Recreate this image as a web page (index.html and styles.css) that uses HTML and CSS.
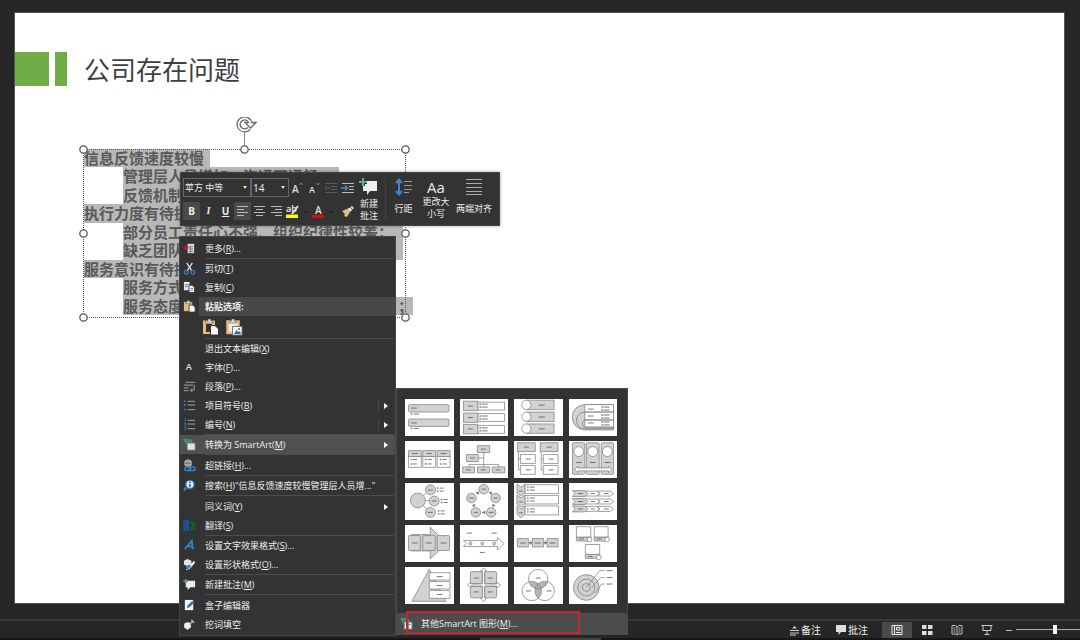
FILE: index.html
```html
<!DOCTYPE html>
<html lang="zh-CN">
<head>
<meta charset="utf-8">
<title>公司存在问题</title>
<link rel="stylesheet" href="styles.css">
</head>
<body>
<main class="workspace">
  <article class="slide">
    <header class="slide-head">
      <span class="block"></span><span class="bar"></span>
      <h1>公司存在问题</h1>
    </header>
    <section class="textbox">
      <p><mark class="pad">信息反馈速度较慢</mark></p>
      <p class="in"><mark class="pad">管理层人员增加，沟通不通畅；</mark></p>
      <p class="in"><mark>反馈机制不健全；</mark></p>
      <p><mark>执行力度有待提高</mark></p>
      <p class="in"><mark class="fill">部分员工责任心不强、组织纪律性较差；</mark></p>
      <p class="in"><mark class="fill">缺乏团队合作精神；</mark></p>
      <p><mark>服务意识有待提高</mark></p>
      <p class="in"><mark>服务方式单一；</mark></p>
      <p class="in"><mark class="long"><span>服务态度不够积极主动、需要再加强</span><span>；</span></mark></p>
      <svg class="frame" viewBox="0 0 334 206" width="334" height="206">
        <path d="M6 32.500H328M6 200.500H328M6.500 32V200M328.500 32V200" stroke="#555" stroke-dasharray="1 1" fill="none"/>
        <path d="M167.500 13V30" stroke="#888"/>
        <g fill="#fff" stroke="#555" stroke-width="1.300"><circle cx="6.500" cy="32.500" r="3.700"/><circle cx="167.500" cy="32.500" r="3.700"/><circle cx="328.500" cy="32.500" r="3.700"/><circle cx="6.500" cy="116.500" r="3.700"/><circle cx="328.500" cy="116.500" r="3.700"/><circle cx="6.500" cy="200.500" r="3.700"/><circle cx="328.500" cy="200.500" r="3.700"/></g>
        <g transform="translate(-1 -2)">
          <path d="M173 13.500A6 6 0 1 1 174.500 8" fill="none" stroke="#666" stroke-width="4.400"/>
          <path d="M169 7.500H180L174.500 13Z" fill="#fff" stroke="#666" stroke-width="1.300"/>
          <path d="M173 13.500A6 6 0 1 1 174.500 8.500" fill="none" stroke="#fff" stroke-width="1.800"/>
        </g>
      </svg>
    </section>
  </article>
</main>

<footer class="status">
  <button><svg width="11" height="12" viewBox="0 0 11 12"><path d="M1 6.500H10M1 9H10M1 11H7" stroke="#ccc"/><path d="M3 4.500L5.500 2L8 4.500Z" fill="#ccc"/></svg>备注</button>
  <button class="comments"><svg width="12" height="12" viewBox="0 0 12 12"><path d="M1 1H11V8H6L3.500 11V8H1Z" fill="#ddd"/></svg>批注</button>
  <button class="view on" aria-label="普通视图"><svg width="12" height="12" viewBox="0 0 12 12"><path d="M1 1.500H11V10.500H1ZM3.500 1V11M5.500 3.500H9V6H5.500ZM5 8.500H10" stroke="#eee" fill="none"/></svg></button>
  <button class="view" aria-label="幻灯片浏览"><svg width="12" height="12" viewBox="0 0 12 12"><path d="M1 1H5.500V5H1ZM7 1H11.500V5H7ZM1 7H5.500V11H1ZM7 7H11.500V11H7Z" fill="#ddd"/></svg></button>
  <button class="view" aria-label="阅读视图"><svg width="12" height="12" viewBox="0 0 12 12"><path d="M1 1.500H4.500L6 3L7.500 1.500H11V10H7.500L6 11L4.500 10H1ZM6 3V11M2.500 4H4.500M2.500 6H4.500M2.500 8H4.500M7.500 4H9.500M7.500 6H9.500M7.500 8H9.500" stroke="#bbb" fill="none"/></svg></button>
  <button class="view" aria-label="幻灯片放映"><svg width="12" height="12" viewBox="0 0 12 12"><path d="M.500 1.500H11.500M2 2V6.500H10V2M6 7V10M3.500 10.500H8.500" stroke="#ccc" fill="none"/></svg></button>
  <button class="minus" aria-label="缩小"><svg width="8" height="8" viewBox="0 0 8 8"><path d="M1 4.500H7" stroke="#bbb"/></svg></button>
  <input class="zoom" type="range" aria-label="缩放" min="0" max="100" value="62">
</footer>
<div class="edge"><span></span></div>

<section class="minibar" aria-label="格式">
  <div class="format">
    <div class="row">
      <label class="pick font"><select aria-label="字体"><option>苹方 中等</option></select></label>
      <label class="pick size"><select aria-label="字号"><option>14</option></select></label>
      <button aria-label="增大字号"><svg width="16" height="16" viewBox="0 0 16 16"><text x="2" y="13" class="la">A</text><path d="M9.500 5L11 3L12.500 5" stroke="#4a8cc8" fill="none"/></svg></button>
      <button aria-label="减小字号"><svg width="16" height="16" viewBox="0 0 16 16"><text x="2" y="13" class="sa">A</text><path d="M9.500 3L11 5L12.500 3" stroke="#4a8cc8" fill="none"/></svg></button>
      <button aria-label="减少缩进"><svg width="16" height="16" viewBox="0 0 16 16"><path d="M1 3.500H13M7 6.500H13M7 9.500H13M1 12.500H13M6 8H1M3 6L1 8L3 10" stroke="#5c5c5c" fill="none"/></svg></button>
      <button aria-label="增加缩进"><svg width="16" height="16" viewBox="0 0 16 16"><path d="M1 3.500H13M8 6.500H13M8 9.500H13M1 12.500H13" stroke="#bbb"/><path d="M0 8H6M4 5.500L6.500 8L4 10.500" stroke="#4a8cc8" stroke-width="1.500" fill="none"/></svg></button>
    </div>
    <div class="row">
      <button class="on"><b>B</b></button>
      <button><i>I</i></button>
      <button><u>U</u></button>
      <button class="on" aria-label="左对齐"><svg width="14" height="14" viewBox="0 0 14 14"><path d="M1 2.500H12M1 5.500H8M1 8.500H12M1 11.500H8" stroke="#bbb"/></svg></button>
      <button aria-label="居中"><svg width="14" height="14" viewBox="0 0 14 14"><path d="M1 2.500H12M3 5.500H10M1 8.500H12M3 11.500H10" stroke="#bbb"/></svg></button>
      <button aria-label="右对齐"><svg width="14" height="14" viewBox="0 0 14 14"><path d="M1 2.500H12M5 5.500H12M1 8.500H12M5 11.500H12" stroke="#bbb"/></svg></button>
      <button class="colour" aria-label="突出显示"><svg width="24" height="16" viewBox="0 0 24 16"><text x="1" y="9" class="ab">ab</text><path d="M7 11L13 3" stroke="#ddd" stroke-width="2"/><path d="M1 11.500H13V15H1Z" fill="#ff0"/><path d="M19 8H23L21 10Z" fill="#1c1c1c"/></svg></button>
      <button class="colour" aria-label="字体颜色"><svg width="24" height="16" viewBox="0 0 24 16"><text x="3" y="11" class="la">A</text><path d="M0 12H12V15H0Z" fill="#e00b0b"/><path d="M17 8H21L19 10Z" fill="#1c1c1c"/></svg></button>
      <button class="brush" aria-label="格式刷"><svg width="14" height="14" viewBox="0 0 14 14"><path d="M1 7L6 5L9 8L6 13L3 12L4 10Z" fill="#e4bd7c"/><path d="M6 5L9 8L10 7L13 4L11 2L8 4Z" fill="#ddd"/><path d="M9 3L12 6" stroke="#555"/></svg></button>
    </div>
  </div>
  <button class="big comment"><svg width="20" height="20" viewBox="0 0 20 20"><path d="M4 3H18V13H11L8 17V13H4Z" fill="#eee"/><path d="M4 0V8M0 4H8" stroke="#333" stroke-width="4"/><path d="M4 0V8M0 4H8" stroke="#5fae88" stroke-width="2"/></svg><span>新建</span><span>批注</span></button>
  <button class="big spacing"><svg width="20" height="20" viewBox="0 0 20 20"><path d="M5 3V15M2 5L5 1.500L8 5M2 13L5 16.500L8 13" stroke="#3d86d2" stroke-width="2" fill="none"/><path d="M10 3.500H18M10 7.500H18M10 11.500H18M10 14.500H15" stroke="#999"/></svg><span>行距</span></button>
  <button class="big case"><span class="aa">Aa</span><span>更改大</span><span>小写</span></button>
  <button class="big justify"><svg width="20" height="20" viewBox="0 0 20 20"><path d="M2 1.500H18M2 5.500H18M2 9.500H18M2 13.500H18M2 16.500H18" stroke="#aaa"/></svg><span>两端对齐</span></button>
</section>

<nav class="menu" aria-label="快捷菜单">
  <button><svg viewBox="0 0 14 14"><path d="M5 2H12V12H5Z" fill="#ddd"/><path d="M6 5H11M6 7.500H11M6 10H11M8 4V12" stroke="#777"/><path d="M0 6L3 3L6 6L3 9Z" fill="#c8102e"/></svg><span>更多(<u>R</u>)...</span></button>
  <hr>
  <button><svg viewBox="0 0 14 14"><path d="M4 1L9.500 9.500M10 1L4.500 9.500" stroke="#ddd" stroke-width="1.400"/><path d="M1.500 11A2 2 0 1 1 5.500 11A2 2 0 1 1 1.500 11M8.500 11A2 2 0 1 1 12.500 11A2 2 0 1 1 8.500 11" fill="none" stroke="#3d7fb8" stroke-width="1.400"/></svg><span>剪切(<u>T</u>)</span></button>
  <button><svg viewBox="0 0 14 14"><path d="M1 1H7V10H1Z" fill="#e8e8e8"/><path d="M2 4H6M2 6H5" stroke="#4577a8"/><path d="M6.500 4.500H10L12.500 7V12.500H6.500Z" fill="#fff" stroke="#333"/><path d="M8 8H11M8 10H11" stroke="#4577a8"/></svg><span>复制(<u>C</u>)</span></button>
  <div class="heading"><svg viewBox="0 0 14 14"><path d="M1 2H10V12H1Z" fill="#e4bd7c"/><path d="M3 4V2H4.500V.500H7V2H8.500V4Z" fill="#ddd" stroke="#444" stroke-width=".600"/><path d="M6.500 5.500H10.500L13 8V13H6.500Z" fill="#fff" stroke="#444"/></svg><b>粘贴选项:</b></div>
  <div class="paste">
    <button aria-label="只保留文本"><svg viewBox="0 0 18 18"><path d="M1 2.500H13V16H1Z" fill="#e4bd7c"/><path d="M4 6H10V7H8V14H4Z" fill="#333"/><path d="M3.500 5V3H6V1H9V3H11V5Z" fill="#ddd" stroke="#444" stroke-width=".500"/><path d="M8.500 7.500H13L16.500 11V17H8.500Z" fill="#fff" stroke="#333"/></svg></button>
    <button aria-label="图片"><svg viewBox="0 0 18 18"><path d="M2.500 3.500H13.500V15H2.500Z" fill="#eee" stroke="#e4bd7c" stroke-width="2.400"/><path d="M4.500 5V3H6.500V1H9.500V3H11.500V5Z" fill="#ddd" stroke="#444" stroke-width=".500"/><path d="M7.500 8.500H17V17H7.500Z" fill="#fff" stroke="#777"/><path d="M9 16L11.500 12L13.500 14L15 13L16 16Z" fill="#2d69b3"/><circle cx="14" cy="11" r="1" fill="#2d69b3"/></svg></button>
  </div>
  <hr>
  <button><svg viewBox="0 0 14 14"></svg><span>退出文本编辑(<u>X</u>)</span></button>
  <button><svg viewBox="0 0 14 14"><text x="3" y="10" class="la">A</text></svg><span>字体(<u>F</u>)...</span></button>
  <button><svg viewBox="0 0 14 14"><path d="M3 2.500H13M1 5.500H11M1 8.500H6M1 11.500H6M12 5V11H8M10 9L8 11L10 13" stroke="#aaa" fill="none"/></svg><span>段落(<u>P</u>)...</span></button>
  <button class="sub split"><svg viewBox="0 0 14 14"><path d="M5 2.500H13M5 6.500H13M5 11.500H13" stroke="#aaa"/><path d="M1 1.500H3V3.500H1ZM1 5.500H3V7.500H1ZM1 10.500H3V12.500H1Z" fill="#3d76b5"/></svg><span>项目符号(<u>B</u>)</span></button>
  <button class="sub split"><svg viewBox="0 0 14 14"><path d="M5 2.500H13M5 6.500H13M5 11.500H13" stroke="#aaa"/><path d="M2.500 0V4M1 5.500H3V8H1M1 10H3V13H1" stroke="#3d76b5" fill="none"/></svg><span>编号(<u>N</u>)</span></button>
  <hr>
  <button class="sub active"><svg viewBox="0 0 14 14"><path d="M0 1H8L11 4L8 7H3Z" fill="#3f8e70"/><path d="M4.500 5.500H13V13H4.500Z" fill="#f0f0f0" stroke="#777"/><path d="M6 8H11.500M6 10.500H11.500" stroke="#ccc"/></svg><span>转换为 SmartArt(<u>M</u>)</span></button>
  <hr class="wide">
  <button><svg viewBox="0 0 14 14"><circle cx="5.500" cy="4.500" r="4" fill="#ddd"/><path d="M1.500 4.500H9.500M5.500 .500V8.500M3.500 1V8M7.500 1V8" stroke="#444" stroke-width=".700"/><rect x="2" y="8.500" width="6" height="4" rx="2" fill="none" stroke="#3882cf" stroke-width="1.600"/><rect x="7" y="8.500" width="6" height="4" rx="2" fill="none" stroke="#3882cf" stroke-width="1.600"/></svg><span>超链接(<u>H</u>)...</span></button>
  <hr>
  <button><svg viewBox="0 0 14 14"><path d="M4 9L1 12.500" stroke="#3a78bd" stroke-width="2.500"/><circle cx="7.500" cy="6" r="4.500" fill="#e6eef7" stroke="#3a78bd" stroke-width="1.500"/><path d="M7.500 5.500V9M7.500 3V4.500" stroke="#2a5a9a" stroke-width="1.600"/></svg><span>搜索(<u>H</u>)"信息反馈速度较慢管理层人员增..."</span></button>
  <hr class="wide">
  <button class="sub"><svg viewBox="0 0 14 14"></svg><span>同义词(<u>Y</u>)</span></button>
  <button><svg viewBox="0 0 14 14"><path d="M1 2H6V12H1ZM2 5H6M2 8H6" fill="#174b8c" stroke="#1d63a8"/><path d="M7 3H11L13 5V12H8V9L10 7Z" fill="#17602a"/></svg><span>翻译(<u>S</u>)</span></button>
  <hr>
  <button><svg viewBox="0 0 14 14"><path d="M2 11L9.500 2L10.500 11M4.500 8H10" stroke="#3682c4" stroke-width="2" fill="none"/></svg><span>设置文字效果格式(<u>S</u>)...</span></button>
  <button><svg viewBox="0 0 14 14"><path d="M1 3L5 1L9 3V7L5 9L1 7Z" fill="#dce8f4"/><path d="M5 10L12 3L13 5L7 12L3 13Z" fill="#eee"/><path d="M3 9L7 7L9 9L5 13Z" fill="#3e85c8"/></svg><span>设置形状格式(<u>O</u>)...</span></button>
  <hr>
  <button><svg viewBox="0 0 14 14"><path d="M3 3H13V10H8L5 13V10H3Z" fill="#eee"/><path d="M3 1V6M.500 3.500H5.500" stroke="#5fae88" stroke-width="1.500"/></svg><span>新建批注(<u>M</u>)</span></button>
  <hr class="wide">
  <button><svg viewBox="0 0 14 14"><path d="M2 1H11V12H2Z" fill="#f2f6fa"/><path d="M4 10L5 7L10 2L12 4L7 9Z" fill="#3671a5"/></svg><span>盒子编辑器</span></button>
  <button><svg viewBox="0 0 14 14"><path d="M2 5L9 9L5 13L1 10Z" fill="#eee"/><circle cx="5" cy="8" r="3.500" fill="#eee"/><path d="M7 7L11 3M9 2L12 5" stroke="#bbb" stroke-width="1.500"/></svg><span>挖词填空</span></button>
</nav>

<section class="gallery" aria-label="SmartArt">
  <div class="thumbs">
    <button aria-label="垂直项目符号列表"><svg viewBox="0 0 49 37"><rect x="3.500" y="5.500" width="41" height="7.500" rx="1.500"/><rect x="3.500" y="20" width="41" height="7.500" rx="1.500"/><path class="d" d="M6 9H12M6 24H12M9 15H14M9 29.500H14"/><path class="o" d="M6 14.500h1v1h-1zM6 29h1v1h-1z"/></svg></button>
    <button aria-label="垂直框列表"><svg viewBox="0 0 49 37"><path class="w" d="M18 3H45V11H18ZM18 14.500H45V22.500H18ZM18 26.500H45V34.500H18Z"/><path d="M3.500 2H18V11.500H3.500ZM3.500 14H18V23.500H3.500ZM3.500 25.500H18V35H3.500Z"/><path class="d" d="M8 7H13M8 18.500H13M8 30H13M22 5H28M22 8H28M22 17H28M22 20H28M22 29H28M22 32H28"/><path class="o" d="M20 4.500h1v1h-1zM20 7.500h1v1h-1zM20 16.500h1v1h-1zM20 19.500h1v1h-1zM20 28.500h1v1h-1zM20 31.500h1v1h-1z"/></svg></button>
    <button aria-label="垂直图片列表"><svg viewBox="0 0 49 37"><path d="M13 1H40.500V10.500H13ZM13 13H40.500V22.500H13ZM13 25H40.500V34.500H13Z"/><g class="w"><circle cx="12.500" cy="5.700" r="4.700"/><circle cx="12.500" cy="17.700" r="4.700"/><circle cx="12.500" cy="29.700" r="4.700"/></g><path class="d" d="M25 6H31M25 18H31M25 30H31"/></svg></button>
    <button aria-label="目标列表"><svg viewBox="0 0 49 37"><path d="M16 5.500A12.500 12.500 0 0 0 16 31H45V5.500Z"/><path d="M16 13A8.500 8.500 0 0 0 16 30H45V13Z"/><path d="M16 21A4.500 4.500 0 0 0 16 29H45V21Z"/><path class="w" d="M16 5.500H45V13H16ZM16 13H45V21H16ZM16 21H45V28H16Z"/><path class="d" d="M19 10H25M19 17H25M19 24H25M35 8H41M35 11H41M35 16H41M35 19H41M35 23H41M35 26H41"/><path class="o" d="M33 7.500h1v1h-1zM33 10.500h1v1h-1zM33 15.500h1v1h-1zM33 18.500h1v1h-1zM33 22.500h1v1h-1zM33 25.500h1v1h-1z"/></svg></button>

    <button aria-label="水平项目符号列表"><svg viewBox="0 0 49 37"><path class="w" d="M3.500 15H16.500V26.500H3.500ZM18 15H31V26.500H18ZM32.500 15H45.500V26.500H32.500Z"/><path d="M3.500 9.500H16.500V15.500H3.500ZM18 9.500H31V15.500H18ZM32.500 9.500H45.500V15.500H32.500Z"/><path class="d" d="M7 12.500H13M22 12.500H27M36 12.500H42M8 18.500H12M8 23H12M23 18.500H27M23 23H27M38 18.500H42M38 23H42"/><path class="o" d="M6 18h1v1h-1zM6 22.500h1v1h-1zM20.500 18h1v1h-1zM20.500 22.500h1v1h-1zM35.500 18h1v1h-1zM35.500 22.500h1v1h-1z"/></svg></button>
    <button aria-label="组织结构图"><svg viewBox="0 0 49 37"><path class="o" d="M24 11V26M18 17H24M9 26V23.500H39V26"/><path d="M17.500 4.500H30V11.500H17.500ZM6.500 13.500H18.500V20.500H6.500ZM2.700 26H14.700V32H2.700ZM17.700 26H30V32H17.700ZM32.700 26H45.300V32H32.700Z"/><path class="d" d="M21 8H26M10 17H15M6 29H11M21 29H26M36 29H41"/></svg></button>
    <button aria-label="层次结构列表"><svg viewBox="0 0 49 37"><path class="o" d="M4.500 10.500V29H7M27.500 10.500V29H30M4.500 18H7M27.500 18H30"/><path d="M3.500 1.500H21.500V10.500H3.500ZM26.500 1.500H44.500V10.500H26.500Z"/><path class="w" d="M6.500 13.500H21.500V22.500H6.500ZM6.500 24.500H21.500V33.500H6.500ZM29.500 13.500H44.500V22.500H29.500ZM29.500 24.500H44.500V33.500H29.500Z"/><path class="d" d="M10 6H15M33 6H38M12 18H17M12 29H17M35 18H40M35 29H40"/></svg></button>
    <button aria-label="连续图片列表"><svg viewBox="0 0 49 37"><rect x="3.500" y="1.500" width="12.500" height="32" rx="1.500"/><rect x="17.500" y="1.500" width="13" height="32" rx="1.500"/><rect x="32.500" y="1.500" width="12.500" height="32" rx="1.500"/><g class="w"><circle cx="9.800" cy="10.500" r="5"/><circle cx="24" cy="10.500" r="5"/><circle cx="38.700" cy="10.500" r="5"/><path d="M5.500 28.500L9 25.500V27H40V25.500L43.500 28.500L40 32V30H9V32Z"/></g><path class="d" d="M7 21.500H13M21 21.500H27M36 21.500H42"/></svg></button>

    <button aria-label="射线列表"><svg viewBox="0 0 49 37"><path class="o" d="M13 17.500L25 7M13 17.500H29M13 17.500L25 29"/><circle cx="13" cy="17.500" r="7.500"/><circle cx="25.700" cy="6.700" r="5"/><circle cx="29.500" cy="18" r="5"/><circle cx="25.700" cy="29.500" r="5"/><path class="d" d="M23 7H28M27 18H32M23 29.500H28M35 5H39M35 8H39M39 16.500H43M39 19.500H43M36 28H40M36 31H40"/><path class="o" d="M32.500 4.500h1v1h-1zM32.500 7.500h1v1h-1zM36.500 16h1v1h-1zM36.500 19h1v1h-1zM33.500 27.500h1v1h-1zM33.500 30.500h1v1h-1z"/></svg></button>
    <button aria-label="基本循环"><svg viewBox="0 0 49 37"><circle cx="24" cy="6" r="4.800"/><circle cx="11.500" cy="15" r="4.800"/><circle cx="36" cy="15" r="4.800"/><circle cx="16" cy="29.500" r="4.800"/><circle cx="31.500" cy="29.500" r="4.800"/><path class="k" d="M15.500 9.500L19.500 8.500L18.500 12ZM29 8.500L32.500 9L31.500 12.500ZM12 22L15.500 21L14.500 24.500ZM32.500 21L36 22L33 24.500ZM22 29.500L25.500 27.500V31.500Z"/><path class="d" d="M22 6H26M9 15H14M34 15H38M14 29.500H18M29 29.500H34"/></svg></button>
    <button aria-label="垂直 V 形列表"><svg viewBox="0 0 49 37"><path class="w" d="M11 1.500H45V10.500H11ZM11 12.500H45V21H11ZM11 23H45V32H11Z"/><path d="M3 1L7 4L11 1V10L7 13L3 10ZM3 12L7 15L11 12V21L7 24L3 21ZM3 23L7 26L11 23V31L7 35L3 31Z"/><path class="d" d="M5 8H9M5 19H9M5 30H9M16 4H21M16 7H21M16 15H21M16 18H21M16 26H21M16 29H21"/><path class="o" d="M13.500 3.500h1v1h-1zM13.500 6.500h1v1h-1zM13.500 14.500h1v1h-1zM13.500 17.500h1v1h-1zM13.500 25.500h1v1h-1zM13.500 28.500h1v1h-1z"/></svg></button>
    <button aria-label="V 形列表"><svg viewBox="0 0 49 37"><g class="w"><path d="M16 8H28L31 10.500L28 13H16ZM29 8H42L45 10.500L42 13H29L31 10.500ZM16 16H28L31 18.500L28 21H16ZM29 16H42L45 18.500L42 21H29L31 18.500ZM16 23.500H28L31 26L28 28.500H16ZM29 23.500H42L45 26L42 28.500H29L31 26Z"/></g><path d="M3.500 7.500H16L19 10.500L16 13.500H3.500L6 10.500ZM3.500 15.500H16L19 18.500L16 21.500H3.500L6 18.500ZM3.500 23H16L19 26L16 29H3.500L6 26Z"/><path class="d" d="M9 10.500H14M22 10.500H26M35 10.500H40M9 18.500H14M22 18.500H26M35 18.500H40M9 26H14M22 26H26M35 26H40"/></svg></button>

    <button aria-label="连续块状流程"><svg viewBox="0 0 49 37"><path d="M6.500 9.500H25.500V2L42 18.500L25.500 34V26H6.500Z"/><rect x="3.500" y="10.500" width="12" height="15" rx="1"/><rect x="18" y="10.500" width="12.500" height="15" rx="1"/><rect x="32.500" y="10.500" width="12.500" height="15" rx="1"/><path class="d" d="M7 18H13M21 18H27M36 18H42"/></svg></button>
    <button aria-label="基本日程表"><svg viewBox="0 0 49 37"><path class="w" d="M3.500 15.500H38V12.500L44.500 18.500L38 25V21.500H3.500L6.500 18.500Z"/><circle cx="10.500" cy="18.500" r="1.500"/><circle cx="22.500" cy="18.500" r="1.500"/><circle cx="34.500" cy="18.500" r="1.500"/><path class="d" d="M7 8H12M32 8H37M20 27.500H25"/></svg></button>
    <button aria-label="基本流程"><svg viewBox="0 0 49 37"><path d="M3.500 13.500H14.500V22H3.500ZM18.500 13.500H30V22H18.500ZM33.500 13.500H44.500V22H33.500Z"/><path class="k" d="M15 17h1.500v-1.500l2 2.200-2 2.200V18.500H15ZM30 17h1.500v-1.500l2 2.200-2 2.200V18.500H30Z"/><path class="d" d="M6 18H12M21 18H27M36 18H42"/></svg></button>
    <button aria-label="图片题注列表"><svg viewBox="0 0 49 37"><path d="M7.500 12H22V16H7.500ZM25.500 12H39.500V16H25.500ZM16.500 29.500H31V33.500H16.500Z"/><path class="w" d="M7.500 1.500H22V12H7.500ZM25.500 1.500H39.500V12H25.500ZM16.500 19.500H31V29.500H16.500Z"/><g class="w"><circle cx="20.700" cy="14.500" r="2.400"/><circle cx="38.500" cy="14.500" r="2.400"/><circle cx="30" cy="32.500" r="2.400"/></g><path class="d" d="M10 14H15M28 14H33M19 31.500H24"/></svg></button>

    <button aria-label="棱锥型列表"><svg viewBox="0 0 49 37"><path d="M24.500 2L7 34.500H41.500Z"/><path class="w" d="M24.500 5.500H45.500V13H24.500ZM24.500 14.500H45.500V22H24.500ZM24.500 23.500H45.500V31.500H24.500Z"/><path class="d" d="M32 9.500H38M32 18.500H38M32 27.500H38"/></svg></button>
    <button aria-label="循环矩阵"><svg viewBox="0 0 49 37"><path class="w" d="M24 1L27 4H25V17H37V15L41 18L37 21V19H25V31H27L24 35L20.500 31H22.500V19H11V21L7.500 18L11 15V17H22.500V4H20.500Z"/><rect x="10.500" y="4.500" width="12" height="12" rx="1.500"/><rect x="25" y="4.500" width="12" height="12" rx="1.500"/><rect x="10.500" y="19.500" width="12" height="11.500" rx="1.500"/><rect x="25" y="19.500" width="12" height="11.500" rx="1.500"/><path class="d" d="M14 11H19M28 11H33M14 25H19M28 25H33"/></svg></button>
    <button aria-label="基本维恩图"><svg viewBox="0 0 49 37"><path class="v" d="M15 15.500A9.800 9.800 0 0 1 24.500 16.800A9.800 9.800 0 0 1 34 15.500A9.800 9.800 0 0 1 27.200 21.400A9.800 9.800 0 0 1 24.500 31.200A9.800 9.800 0 0 1 21.800 21.400A9.800 9.800 0 0 1 15 15.500Z"/><g class="rings"><circle cx="24.500" cy="12" r="9.800"/><circle cx="18" cy="24" r="9.800"/><circle cx="31" cy="24" r="9.800"/></g><path class="d" d="M22 11H27M12 24H17M33 24H38"/></svg></button>
    <button aria-label="基本目标图"><svg viewBox="0 0 49 37"><circle cx="17.500" cy="20.500" r="13"/><circle cx="17.500" cy="20.500" r="8.500"/><circle cx="17.500" cy="20.500" r="4"/><path class="o" d="M17.500 20.500L31 3.500H36M23 21L32 10.500H36M26 26L33 17H36"/><path class="d" d="M38 3.500H44M38 10.500H44M38 17H44"/></svg></button>
  </div>
  <button class="more"><svg viewBox="0 0 14 14"><path d="M0 1H8L11 4L8 7H3Z" fill="#3f8e70"/><path d="M4.500 5.500H13V13H4.500Z" fill="#f0f0f0" stroke="#777"/><path d="M6 8H11.500M9 6V13" stroke="#3f8e70"/></svg><span>其他SmartArt 图形(<u>M</u>)...</span></button>
  <span class="callout"></span>
</section>
</body>
</html>
```
FILE: styles.css
```css
* { box-sizing: border-box; }
body {
  margin: 0;
  min-height: 100vh;
  display: flex;
  flex-direction: column;
  background: #262626;
  color: #eee;
  font: 9px/12px "Open Sans", "Noto Sans CJK SC", sans-serif;
  overflow: hidden;
}
button, select {
  font: inherit;
  color: inherit;
  background: none;
  border: 0;
  padding: 0;
  margin: 0;
}
button { display: flex; align-items: center; }
svg { display: block; flex: none; }

/* slide */
.workspace { flex: 1; display: flex; padding: 13px 16px 16px 15px; }
.slide { flex: 1; position: relative; background: #fff; box-shadow: 0 0 0 1px #555; }
.slide-head { display: flex; align-items: center; gap: 6px; padding-top: 39px; }
.block { width: 34px; height: 34px; background: #70ad47; }
.bar { width: 12px; height: 34px; background: #70ad47; }
h1 {
  margin: 0 0 0 11px;
  color: #404040;
  font: 400 26px/34px "Noto Sans CJK SC", sans-serif;
}
.textbox {
  position: absolute;
  left: 69px;
  top: 136px;
  width: 322px;
  height: 166px;
  display: grid;
  grid-auto-rows: 1fr;
  color: #595959;
  font: 700 15px/18px "Noto Sans CJK SC", sans-serif;
  white-space: nowrap;
}
.textbox p { margin: 0; display: flex; }
.textbox .in { padding-left: 39px; }
mark { background: #b8b8b8; color: inherit; }
.pad { padding-right: 6px; }
.fill { width: 280px; }
.long { display: flex; justify-content: space-between; flex: none; width: 290px; }
.frame { position: absolute; left: -7px; top: -32px; }

/* status bar */
.status {
  height: 19px;
  display: flex;
  align-items: center;
  justify-content: flex-end;
  background: #262626;
  border-top: 2px solid #383838;
  font-size: 10px;
}
.status button { gap: 1px; }
.comments { margin: 0 14px; }
.view { width: 30px; height: 16px; justify-content: center; }
.view.on { background: #4a4a4a; }
.minus { margin: 0 3px; }
.zoom {
  appearance: none;
  width: 64px;
  height: 10px;
  margin: 0;
  background: linear-gradient(#aaa, #aaa) center / 100% 1px no-repeat;
}
.zoom::-webkit-slider-thumb { appearance: none; width: 4px; height: 9px; background: #f2f2f2; }
.edge { height: 2px; background: #161616; }
.edge span { display: block; width: 121px; height: 2px; margin: 0 auto; background: #444; }

/* floating format bar */
.minibar {
  position: absolute;
  left: 180px;
  top: 172px;
  width: 320px;
  height: 54px;
  display: flex;
  padding: 5px 2px;
  background: #333;
  border: 1px solid #444;
  box-shadow: 0 0 3px #0006;
}
.format { width: 174px; display: flex; flex-direction: column; gap: 5px; }
.row { display: flex; height: 19px; }
.row button { width: 17px; justify-content: center; }
.row .on { background: #4a4a4a; }
.row .colour { width: 27px; justify-content: flex-start; }
.row .brush { width: 18px; }
.row b, .row i, .row u { font: 700 10px/12px "Open Sans", sans-serif; }
.row i { font-family: "Liberation Serif", serif; font-style: italic; }
.pick { position: relative; border: 1px solid #666; height: 19px; }
.pick::after {
  content: "";
  position: absolute;
  right: 3px;
  top: 7px;
  border: 2px solid transparent;
  border-top: 3px solid #ddd;
  border-bottom: 0;
}
.pick select { appearance: none; width: 100%; height: 17px; padding-left: 1px; outline: 0; }
.font { width: 68px; }
.size { width: 38px; }
.size select { font-size: 10px; }
.la { font: 600 10px "Open Sans", sans-serif; fill: #ddd; }
.sa { font: 600 9px "Open Sans", sans-serif; fill: #ddd; }
.ab { font: 600 9px "Open Sans", sans-serif; fill: #eee; }
.big { flex-direction: column; justify-content: flex-start; }
.comment { width: 24px; }
.spacing { width: 36px; margin-left: 4px; border-left: 1px solid #444; }
.spacing svg, .justify svg { margin-bottom: 5px; }
.case { width: 30px; }
.justify { flex: 1; }
.aa { font: 15px/18px "Open Sans", sans-serif; }

/* context menu */
.menu {
  position: absolute;
  left: 180px;
  top: 237px;
  width: 215px;
  padding: 2px 0 1px;
  background: #333;
  box-shadow: 0 0 0 1px #444;
}
.menu > button, .heading {
  width: 100%;
  height: 19px;
  display: flex;
  align-items: center;
  gap: 9px;
  padding: 0 7px 0 3px;
  white-space: nowrap;
}
.menu > button > svg, .heading > svg, .more > svg { width: 13px; height: 13px; }
.heading { background: linear-gradient(#484848, #484848) 19px 0 no-repeat; }
.menu hr { height: 1px; margin: 0 1px 0 25px; border: 0; background: #4c4c4c; }
.menu hr.wide { margin-bottom: 1px; }
.menu .sub::after {
  content: "";
  margin-left: auto;
  border: 3px solid transparent;
  border-left: 4px solid #fff;
  border-right: 0;
}
.menu .split { background: linear-gradient(#484848, #484848) 198px 4px / 1px 11px no-repeat; }
.menu .active { background: #505050; }
.paste { display: flex; gap: 5px; height: 22px; padding-left: 22px; }
.paste svg { width: 18px; height: 18px; }

/* SmartArt gallery */
.gallery {
  position: absolute;
  left: 396px;
  top: 388px;
  width: 232px;
  background: #333;
  border: 1px solid #4a4a4a;
  padding-top: 10px;
}
.thumbs { display: grid; grid-template-columns: repeat(4, 1fr); gap: 5px 6px; padding: 0 10px 9px 8px; }
.thumbs button { background: #fff; }
.thumbs svg { width: 100%; height: 37px; fill: #d2d2d2; stroke: #777; stroke-width: 0.7; }
.thumbs .w { fill: #fff; }
.thumbs .o, .thumbs .rings { fill: none; }
.thumbs .k { fill: #777; stroke: none; }
.thumbs .v { fill: #b5b5b5; stroke: none; }
.thumbs .d { fill: none; stroke: #555; stroke-width: 0.8; }
.more { width: 100%; height: 21px; gap: 8px; padding-left: 3px; background: #4c4c4c; white-space: nowrap; }
.callout {
  position: absolute;
  left: 9px;
  bottom: 0;
  width: 174px;
  height: 23px;
  border: 2px solid #c9252f;
  pointer-events: none;
}
```
